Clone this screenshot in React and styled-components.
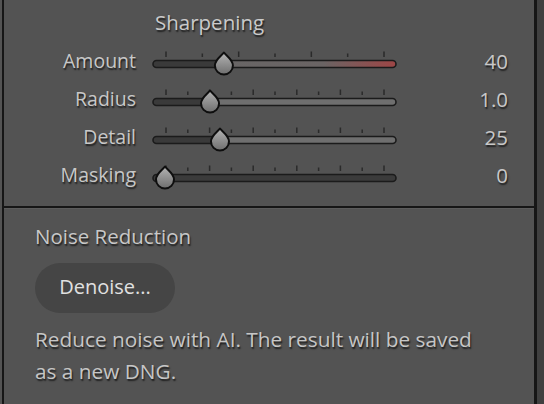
import React from "react";
import styled, { createGlobalStyle } from "styled-components";

const GlobalStyle = createGlobalStyle`
  html, body {
    margin: 0;
    padding: 0;
    background: #3d3d3d;
  }
  body {
    font-family: "Open Sans", "Noto Sans", sans-serif;
  }
`;

const sliders = [
  { label: "Amount", value: "40", pos: 0.255, ticks: 7, tinted: true },
  { label: "Radius", value: "1.0", pos: 0.195, ticks: 11 },
  { label: "Detail", value: "25", pos: 0.238, ticks: 11 },
  { label: "Masking", value: "0", pos: 0.0, ticks: 11, dark: true },
];

const SliderTrack = ({ pos, ticks, tinted, dark, id }) => {
  const x0 = 1;
  const x1 = 244;
  const thumbX = 13 + pos * (x1 - x0 - 12);
  const tickStart = 14;
  const tickEnd = 232;
  const tickList = Array.from({ length: ticks }, (_, i) => ({
    x: tickStart + ((tickEnd - tickStart) * i) / (ticks - 1),
    tall: i % 2 === 0 || i === ticks - 1,
  }));
  return (
    <svg width="246" height="38" viewBox="0 0 246 38">
      <defs>
        <linearGradient id={`fill-${id}`} x1="0" x2="1" y1="0" y2="0">
          <stop offset="0" stopColor="#676767" />
          <stop offset="0.7" stopColor="#6a6464" />
          <stop offset="1" stopColor="#9e4646" />
        </linearGradient>
        <linearGradient id={`thumb-${id}`} x1="0" x2="0" y1="0" y2="1">
          <stop offset="0" stopColor="#b4b4b4" />
          <stop offset="1" stopColor="#6e6e6e" />
        </linearGradient>
        <clipPath id={`clip-${id}`}>
          <rect x={x0} y="17.5" width={x1 - x0} height="7" rx="3.5" />
        </clipPath>
      </defs>
      {tickList.map((t, i) => (
        <rect
          key={i}
          x={t.x - 0.75}
          y={t.tall ? 8.5 : 10.5}
          width="1.5"
          height={t.tall ? 5.5 : 3.5}
          fill="#2a2a2a"
        />
      ))}
      <g clipPath={`url(#clip-${id})`}>
        <rect
          x={x0}
          y="17.5"
          width={x1 - x0}
          height="7"
          fill={dark ? "#3b3b3b" : tinted ? `url(#fill-${id})` : "#6f6f6f"}
        />
        <rect x={x0} y="17.5" width={thumbX - x0} height="7" fill="#3a3a3a" />
      </g>
      <rect
        x={x0}
        y="17.5"
        width={x1 - x0}
        height="7"
        rx="3.5"
        fill="none"
        stroke="#1b1b1b"
        strokeWidth="1.6"
      />
      <path
        d={`M ${thumbX} 9.5 C ${thumbX + 2} 12.5, ${thumbX + 9} 16.5, ${thumbX + 9} 22.5 A 9 9 0 0 1 ${thumbX - 9} 22.5 C ${thumbX - 9} 16.5, ${thumbX - 2} 12.5, ${thumbX} 9.5 Z`}
        fill={`url(#thumb-${id})`}
        stroke="#0e0e0e"
        strokeWidth="2"
        strokeLinejoin="round"
      />
    </svg>
  );
};

const App = () => {
  return (
    <>
      <GlobalStyle />
      <Frame>
        <Panel>
          <Sharpening>
            <Title>Sharpening</Title>
            <SliderList>
              {sliders.map((s, i) => (
                <Row key={s.label}>
                  <Label>{s.label}</Label>
                  <SliderTrack
                    id={i}
                    pos={s.pos}
                    ticks={s.ticks}
                    tinted={s.tinted}
                    dark={s.dark}
                  />
                  <Value>{s.value}</Value>
                </Row>
              ))}
            </SliderList>
          </Sharpening>
          <NoiseSection>
            <SectionTitle>Noise Reduction</SectionTitle>
            <DenoiseButton>Denoise...</DenoiseButton>
            <Description>
              Reduce noise with AI. The result will be saved
              <br />
              as a new DNG.
            </Description>
          </NoiseSection>
        </Panel>
        <Gutter />
      </Frame>
    </>
  );
};

export default App;

const Frame = styled.div`
  display: flex;
  height: 404px;
  padding-left: 2px;
  background: #535353;
  overflow: hidden;
`;

const Panel = styled.div`
  width: 530px;
  display: flex;
  flex-direction: column;
  border-left: 2px solid #161616;
  border-right: 3px solid #161616;
  background: #535353;
  color: #c8c8c8;
  text-shadow: 1px 1.5px 1.5px rgba(0, 0, 0, 0.65);
`;

const Gutter = styled.div`
  flex: 1;
  background: #404040;
`;

const Sharpening = styled.div`
  height: 206px;
  display: flex;
  flex-direction: column;
  border-bottom: 2px solid #161616;
  box-shadow: 0 1px 0 #5c5c5c;
`;

const Title = styled.div`
  margin: 8px 0 0 151px;
  height: 28px;
  font-size: 20.5px;
  line-height: 28px;
  color: #cacaca;
`;

const SliderList = styled.div`
  display: flex;
  flex-direction: column;
  margin-top: 7px;
`;

const Row = styled.div`
  display: grid;
  grid-template-columns: 132px 246px 1fr;
  column-gap: 16px;
  align-items: center;
  height: 38px;
`;

const Label = styled.div`
  text-align: right;
  font-size: 19.5px;
  line-height: 38px;
  margin-top: -2px;
`;

const Value = styled.div`
  text-align: right;
  padding-right: 26px;
  font-size: 20.5px;
  line-height: 38px;
  margin-top: -2px;
`;

const NoiseSection = styled.div`
  display: flex;
  flex-direction: column;
  align-items: flex-start;
  padding: 14px 0 0 31px;
`;

const SectionTitle = styled.div`
  font-size: 20.5px;
  line-height: 28px;
  color: #c8c8c8;
`;

const DenoiseButton = styled.button`
  margin-top: 13px;
  width: 140px;
  height: 50px;
  border: none;
  border-radius: 25px;
  background: #454545;
  color: #e0e0e0;
  font-family: "Open Sans", "Noto Sans", sans-serif;
  font-size: 20px;
  padding: 0 0 4px 0;
  text-shadow: none;
  cursor: pointer;
`;

const Description = styled.p`
  margin: 10px 0 0 0;
  font-size: 20.8px;
  line-height: 32px;
  color: #c6c6c6;
  white-space: nowrap;
`;
